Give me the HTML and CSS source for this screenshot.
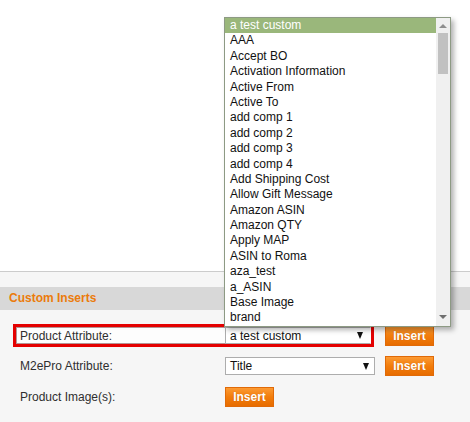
FILE: index.html
```html
<!DOCTYPE html>
<html>
<head>
<meta charset="utf-8">
<link rel="stylesheet" href="styles.css">
</head>
<body>
<div class="page">
  <div class="top"></div>
  <div class="panel">
    <div class="panel-head">Custom Inserts</div>
    <div class="fields">
      <div class="row row-first">
        <div class="hl">
          <span class="label">Product Attribute:</span>
          <div class="select sel-narrow"><span class="sel-text">a test custom</span><span class="caret"></span></div>
        </div>
        <button class="btn btn-gap1">Insert</button>
      </div>
      <div class="row row-second">
        <span class="label">M2ePro Attribute:</span>
        <div class="select sel-wide"><span class="sel-text">Title</span><span class="caret"></span></div>
        <button class="btn btn-gap2">Insert</button>
      </div>
      <div class="row row-third">
        <span class="label">Product Image(s):</span>
        <button class="btn">Insert</button>
      </div>
    </div>
  </div>

  <div class="dropdown">
    <ul class="options">
      <li class="opt selected">a test custom</li>
      <li class="opt">AAA</li>
      <li class="opt">Accept BO</li>
      <li class="opt">Activation Information</li>
      <li class="opt">Active From</li>
      <li class="opt">Active To</li>
      <li class="opt">add comp 1</li>
      <li class="opt">add comp 2</li>
      <li class="opt">add comp 3</li>
      <li class="opt">add comp 4</li>
      <li class="opt">Add Shipping Cost</li>
      <li class="opt">Allow Gift Message</li>
      <li class="opt">Amazon ASIN</li>
      <li class="opt">Amazon QTY</li>
      <li class="opt">Apply MAP</li>
      <li class="opt">ASIN to Roma</li>
      <li class="opt">aza_test</li>
      <li class="opt">a_ASIN</li>
      <li class="opt">Base Image</li>
      <li class="opt">brand</li>
    </ul>
    <div class="scrollbar">
      <span class="arrow-up"></span>
      <span class="thumb"></span>
      <span class="track"></span>
      <span class="arrow-down"></span>
    </div>
  </div>
</div>
</body>
</html>
```

FILE: styles.css
```css
* { box-sizing: border-box; }
html, body { margin: 0; padding: 0; }
body {
  width: 470px;
  height: 422px;
  overflow: hidden;
  background: #fff;
  font-family: "Liberation Sans", Arial, sans-serif;
  font-size: 12px;
  color: #2f2f2f;
}
.page { position: relative; width: 470px; height: 422px; }
.top { height: 271px; background: #fff; }
.panel {
  border-top: 1px solid #cccccc;
  background: #f6f6f6;
  padding-top: 15px;
  height: 151px;
}
.panel-head {
  height: 23px;
  line-height: 23px;
  background: #d8d8d8;
  padding-left: 9px;
  font-weight: bold;
  font-size: 12px;
  color: #eb7b0b;
}
.fields { padding-top: 14px; }
.row {
  display: flex;
  align-items: center;
  height: 20px;
  padding-left: 20px;
}
.row-first { height: 23px; padding-left: 13px; }
.row-second { margin-top: 9px; }
.row-third { margin-top: 11px; }
.hl {
  display: flex;
  align-items: center;
  width: 361px;
  height: 23px;
  border: 3px solid #e40000;
  box-shadow: inset 0 0 0 1px rgba(90, 20, 20, 0.45);
  background: #fdfdfd;
  padding-left: 4px;
}
.label { width: 205px; flex: none; color: #2f2f2f; }
.select {
  display: flex;
  align-items: center;
  justify-content: space-between;
  height: 18px;
  border: 1px solid #adadad;
  background: #fff;
  padding: 0 5px 0 4px;
  font-size: 12px;
  color: #111;
}
.sel-narrow { width: 146px; height: 17px; border-right-color: #fff; }
.sel-wide { width: 150px; }
.caret {
  width: 0;
  height: 0;
  border-left: 3px solid transparent;
  border-right: 3px solid transparent;
  border-top: 7px solid #111;
}
.sel-narrow .caret { margin-right: 2px; }
.btn {
  width: 49px;
  height: 20px;
  padding: 0;
  border: 1px solid #e06a08;
  background: linear-gradient(#fc9a33, #f27d0c 50%, #e76c00);
  color: #fff;
  font-family: "Liberation Sans", Arial, sans-serif;
  font-weight: bold;
  font-size: 12px;
  text-shadow: 0 0 1px rgba(150, 60, 0, 0.4);
  flex: none;
}
.btn-gap1 { margin-left: 11px; }
.btn-gap2 { margin-left: 10px; }

.dropdown {
  position: absolute;
  left: 224px;
  top: 17px;
  width: 227px;
  height: 310px;
  border: 1px solid #8d9a84;
  background: #fff;
  display: flex;
  box-shadow: 3px 3px 5px rgba(0, 0, 0, 0.3);
}
.options {
  list-style: none;
  margin: 0;
  padding: 0;
  flex: 1;
}
.opt {
  height: 15.4px;
  line-height: 15.4px;
  padding-left: 5px;
  font-size: 12px;
  color: #111;
  white-space: nowrap;
}
.opt.selected { background: #9ab77b; color: #fff; }
.scrollbar {
  width: 14px;
  background: #f0f0f0;
  display: flex;
  flex-direction: column;
  align-items: center;
}
.arrow-up, .arrow-down {
  width: 0;
  height: 0;
  border-left: 4px solid transparent;
  border-right: 4px solid transparent;
}
.arrow-up { border-bottom: 4px solid #8f8f8f; margin-top: 6px; }
.thumb {
  width: 10px;
  height: 41px;
  background: #c1c1c1;
  margin-top: 5px;
}
.track { flex: 1; }
.arrow-down { border-top: 4px solid #6f6f6f; margin-bottom: 7px; }
```
